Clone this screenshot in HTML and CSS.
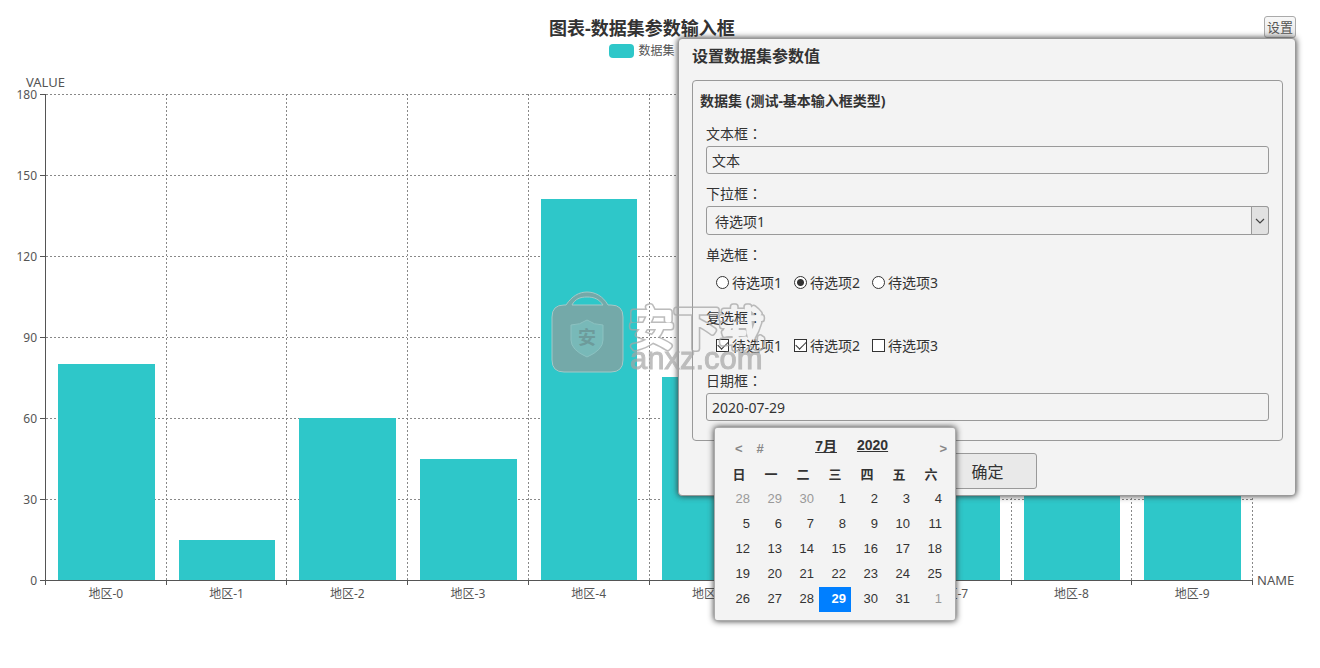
FILE: index.html
```html
<!DOCTYPE html>
<html lang="zh-CN">
<head>
<meta charset="utf-8">
<title>图表-数据集参数输入框</title>
<link rel="stylesheet" href="styles.css">
</head>
<body>
<main class="chart">
  <header class="chart-head">
    <h1 class="chart-title">图表-数据集参数输入框</h1>
    <div class="legend"><span class="swatch"></span>数据集</div>
    <div class="value-name">VALUE</div>
  </header>
  <ol class="y-axis">
    <li>180</li><li>150</li><li>120</li><li>90</li><li>60</li><li>30</li><li>0</li>
  </ol>
  <div class="plot">
    <div class="rows"><i></i><i></i><i></i><i></i><i></i><i></i></div>
    <div class="bars">
      <div class="slot"><div class="bar" style="height:44.44%"></div></div>
      <div class="slot"><div class="bar" style="height:8.33%"></div></div>
      <div class="slot"><div class="bar" style="height:33.33%"></div></div>
      <div class="slot"><div class="bar" style="height:25%"></div></div>
      <div class="slot"><div class="bar" style="height:78.33%"></div></div>
      <div class="slot"><div class="bar" style="height:41.67%"></div></div>
      <div class="slot"><div class="bar" style="height:50%"></div></div>
      <div class="slot"><div class="bar" style="height:50%"></div></div>
      <div class="slot"><div class="bar" style="height:50%"></div></div>
      <div class="slot"><div class="bar" style="height:50%"></div></div>
    </div>
  </div>
  <div class="axis-name">NAME</div>
  <ol class="x-axis">
    <li>地区-0</li><li>地区-1</li><li>地区-2</li><li>地区-3</li><li>地区-4</li><li>地区-5</li><li>地区-6</li><li>地区-7</li><li>地区-8</li><li>地区-9</li>
  </ol>
</main>

<div class="settings">
  <button class="settings-btn" type="button">设置</button>
  <form class="panel">
    <h2 class="panel-title">设置数据集参数值</h2>
    <section class="dataset">
      <h3 class="dataset-title">数据集 (测试-基本输入框类型)</h3>
      <div class="field">
        <label class="label" for="text">文本框<span class="colon" lang="zh-TW">：</span></label>
        <input class="input" id="text" type="text" value="文本">
      </div>
      <div class="field">
        <label class="label" for="choice">下拉框<span class="colon" lang="zh-TW">：</span></label>
        <div class="select-wrap">
          <select class="select" id="choice"><option>待选项1</option><option>待选项2</option><option>待选项3</option></select>
          <span class="arrow"><svg width="10" height="6" viewBox="0 0 10 6"><path d="M1 1l4 4 4-4" fill="none" stroke="#444" stroke-width="1.2"/></svg></span>
        </div>
      </div>
      <div class="field">
        <span class="label">单选框<span class="colon" lang="zh-TW">：</span></span>
        <div class="options">
          <label class="option"><input class="radio" type="radio" name="r">待选项1</label>
          <label class="option"><input class="radio" type="radio" name="r" checked>待选项2</label>
          <label class="option"><input class="radio" type="radio" name="r">待选项3</label>
        </div>
      </div>
      <div class="field">
        <span class="label">复选框<span class="colon" lang="zh-TW">：</span></span>
        <div class="options">
          <label class="option"><input class="check" type="checkbox" checked>待选项1</label>
          <label class="option"><input class="check" type="checkbox" checked>待选项2</label>
          <label class="option"><input class="check" type="checkbox">待选项3</label>
        </div>
      </div>
      <div class="field date-field">
        <label class="label" for="date">日期框<span class="colon" lang="zh-TW">：</span></label>
        <input class="input" id="date" type="text" value="2020-07-29">
        <div class="calendar">
          <div class="cal-head">
            <button class="cal-nav" type="button">&lt;</button>
            <button class="cal-nav" type="button">#</button>
            <div class="cal-title"><button class="cal-pick" type="button">7月</button><button class="cal-pick" type="button">2020</button></div>
            <button class="cal-nav" type="button">&gt;</button>
          </div>
          <table class="cal-table">
            <thead><tr><th>日</th><th>一</th><th>二</th><th>三</th><th>四</th><th>五</th><th>六</th></tr></thead>
            <tbody>
              <tr><td class="other">28</td><td class="other">29</td><td class="other">30</td><td>1</td><td>2</td><td>3</td><td>4</td></tr>
              <tr><td>5</td><td>6</td><td>7</td><td>8</td><td>9</td><td>10</td><td>11</td></tr>
              <tr><td>12</td><td>13</td><td>14</td><td>15</td><td>16</td><td>17</td><td>18</td></tr>
              <tr><td>19</td><td>20</td><td>21</td><td>22</td><td>23</td><td>24</td><td>25</td></tr>
              <tr><td>26</td><td>27</td><td>28</td><td class="selected">29</td><td>30</td><td>31</td><td class="other">1</td></tr>
            </tbody>
          </table>
        </div>
      </div>
    </section>
    <div class="actions"><button class="confirm" type="button">确定</button></div>
  </form>
</div>

<div class="watermark">
  <svg class="wm" width="214" height="84" viewBox="0 0 214 84">
    <defs>
      <mask id="hollow" maskUnits="userSpaceOnUse" x="70" y="0" width="146" height="84">
        <text class="wm-cn wm-outer" x="78" y="55">安下载</text>
        <text class="wm-cn wm-inner" x="78" y="55">安下载</text>
      </mask>
    </defs>
    <path d="M15 15C21 6 28 2 36 2s16 4 21 13h3q12 0 12 12v43q0 12-12 12H13Q1 82 1 70V27q0-12 12-12zM21 15h31C48 9 43 7 36 7s-12 2-15 8z" fill="#82a3a3" fill-opacity=".84" fill-rule="evenodd" stroke="#a4c8c7"/>
    <path d="M36 30q7 5 16 5v15q0 10-16 17-16-7-16-17V35q9 0 16-5z" fill="#78b9b8" stroke="#8cc2c1"/>
    <text class="wm-seal" x="36" y="54" text-anchor="middle">安</text>
    <rect x="70" y="0" width="146" height="84" fill="#a5a5a5" fill-opacity=".75" mask="url(#hollow)"/>
    <text class="wm-url" x="79" y="79">anxz.com</text>
  </svg>
</div>
</body>
</html>
```
FILE: styles.css
```css
* { box-sizing: border-box; }
body {
  margin: 0;
  background: #fff;
  color: #333;
  font-family: "Noto Sans", "Noto Sans CJK SC", sans-serif;
  font-size: 14px;
  position: relative;
}
h1, h2, h3, ol { margin: 0; padding: 0; }
ol { list-style: none; }
button, input, select { font: inherit; color: inherit; margin: 0; }

/* chart */
.chart {
  display: grid;
  grid-template-columns: 45px 1fr 67px;
  grid-template-rows: auto 1fr 87px;
  min-height: 100vh;
  font-size: 12px;
  color: #555;
}
.chart-head { grid-column: 1 / -1; height: 94px; padding: 16px 36px 0 0; text-align: center; }
.chart-title { font-size: 18px; line-height: 24px; color: #333; }
.legend { display: flex; justify-content: center; align-items: center; gap: 4px; line-height: 22px; }
.swatch { width: 25px; height: 14px; border-radius: 4px; background: #2ec7c9; }
.value-name { margin-top: 12px; padding-left: 26px; text-align: left; font-size: 13px; line-height: 16px; }
.y-axis { display: flex; flex-direction: column; justify-content: space-between; }
.y-axis li {
  display: flex;
  align-items: center;
  justify-content: flex-end;
  gap: 3px;
  height: 1px;
  line-height: 1px;
}
.y-axis li::after { content: ""; width: 5px; height: 1px; background: #555; }
.plot { display: grid; border-left: 1px solid #555; border-bottom: 1px solid #555; }
.rows, .bars { grid-area: 1 / 1; display: flex; }
.rows { flex-direction: column; }
.rows i { flex: 1; background: repeating-linear-gradient(90deg, #888 0 2px, #fff 2px 4px) top / 100% 1px no-repeat; }
.slot {
  flex: 1;
  display: flex;
  align-items: flex-end;
  justify-content: center;
  background: repeating-linear-gradient(#888 0 2px, #fff 2px 4px) right / 1px 100% no-repeat;
}
.bar { width: 80%; background: #2ec7c9; }
.axis-name { align-self: end; padding-left: 4px; height: 1px; font-size: 13px; line-height: 1px; }
.x-axis { grid-column: 2; display: flex; border-left: 1px solid #555; height: 4px; }
.x-axis li { flex: 1; border-right: 1px solid #555; text-align: center; line-height: 26px; }

/* settings popup */
.settings {
  position: absolute;
  top: 16px;
  right: 24px;
  width: 618px;
  display: flex;
  flex-direction: column;
  align-items: flex-end;
}
.settings-btn {
  width: 32px;
  height: 22px;
  padding: 0;
  border: 1px solid #aaa;
  border-radius: 3px;
  background: linear-gradient(#f8f8f8, #e6e6e6);
  color: #555;
  font-size: 13px;
  line-height: 20px;
}
.panel {
  width: 100%;
  padding: 5px 12px 6px 13px;
  border: 1px solid #999;
  border-radius: 4px;
  background: #f3f3f3;
  box-shadow: 0 0 6px #333;
}
.panel-title {
  margin-bottom: 12px;
  font-size: 16px;
  font-weight: 600;
  line-height: 24px;
}
.dataset {
  display: flex;
  flex-direction: column;
  gap: 8px;
  padding: 8px 13px 19px;
  border: 1px solid #999;
  border-radius: 4px;
}
.dataset-title { margin: 0 0 1px -6px; font-size: 14px; line-height: 24px; }
.field { display: flex; flex-direction: column; }
.date-field { position: relative; }
.label { height: 24px; line-height: 22px; }
.colon { font-family: "Noto Sans CJK TC", sans-serif; }
.input {
  width: 100%;
  height: 28px;
  padding: 0 5px;
  border: 1px solid #999;
  border-radius: 3px;
  background: #f3f3f3;
}
.select-wrap { display: grid; }
.select {
  grid-area: 1 / 1;
  appearance: none;
  height: 29px;
  padding: 2px 24px 0 8px;
  border: 1px solid #999;
  border-radius: 3px;
  background: #f3f3f3;
}
.arrow {
  grid-area: 1 / 1;
  justify-self: end;
  display: flex;
  align-items: center;
  justify-content: center;
  width: 18px;
  border: 1px solid #999;
  border-radius: 0 3px 3px 0;
  background: #e1e1e1;
  pointer-events: none;
}
.options { display: flex; gap: 12px; padding-left: 10px; height: 31px; padding-bottom: 1px; }
.option { display: flex; align-items: center; gap: 3px; }
.radio, .check { appearance: none; width: 13px; height: 13px; border: 1px solid #333; background: #fff; }
.radio { border-radius: 50%; }
.radio:checked { background: radial-gradient(circle, #333 0 3px, #fff 4px); }
.check { display: grid; place-items: center; }
.check:checked::before {
  content: "";
  width: 9px;
  height: 5px;
  border-left: 1px solid #333;
  border-bottom: 1px solid #333;
  transform: translateY(-1px) rotate(-45deg);
}
.actions { display: flex; justify-content: center; padding-top: 12px; }
.confirm {
  width: 98px;
  height: 36px;
  border: 1px solid #999;
  border-radius: 3px;
  background: #e9e9e9;
  font-size: 16px;
}

/* calendar */
.calendar {
  position: absolute;
  z-index: 2;
  top: calc(100% + 6px);
  left: 8px;
  padding: 7px 8px 8px;
  border: 1px solid #aaa;
  border-radius: 3px;
  background: #f3f3f3;
  box-shadow: 0 0 6px #333;
  font-family: "Liberation Sans", "Noto Sans CJK SC", sans-serif;
  font-size: 13px;
}
.cal-head { display: flex; align-items: center; height: 27px; padding: 0 0 0 12px; gap: 14px; }
.cal-nav, .cal-pick { padding: 0; border: 0; background: none; font-weight: bold; }
.cal-nav { color: #888; }
.cal-title { flex: 1; display: flex; justify-content: center; gap: 20px; font-size: 14px; padding-bottom: 8px; }
.cal-pick { text-decoration: underline; }
.cal-table { border-collapse: collapse; table-layout: fixed; }
.cal-table th { width: 32px; height: 25px; padding: 0; text-align: center; line-height: 24px; }
.cal-table td { width: 32px; height: 25px; padding: 0 5px 2px 0; text-align: right; line-height: 22px; }
.cal-table .other { color: #999; }
.cal-table .selected { background: #007fff; color: #fff; font-weight: bold; }

/* watermark */
.watermark {
  position: absolute;
  inset: 0 4px 4px 0;
  display: flex;
  align-items: center;
  justify-content: center;
  pointer-events: none;
}
.wm { overflow: visible; }
.wm-cn { font: 300 45px "Noto Sans CJK SC", sans-serif; stroke-linejoin: round; }
.wm-outer { fill: #fff; stroke: #fff; stroke-width: 7px; }
.wm-inner { fill: #000; stroke: #000; stroke-width: 4px; }
.wm-seal { font: bold 18px "Noto Sans CJK SC", sans-serif; fill: #6d9b9b; }
.wm-url { font: 31px "Liberation Sans", sans-serif; fill: #a5a5a5; stroke: #a5a5a5; opacity: .7; }
```
